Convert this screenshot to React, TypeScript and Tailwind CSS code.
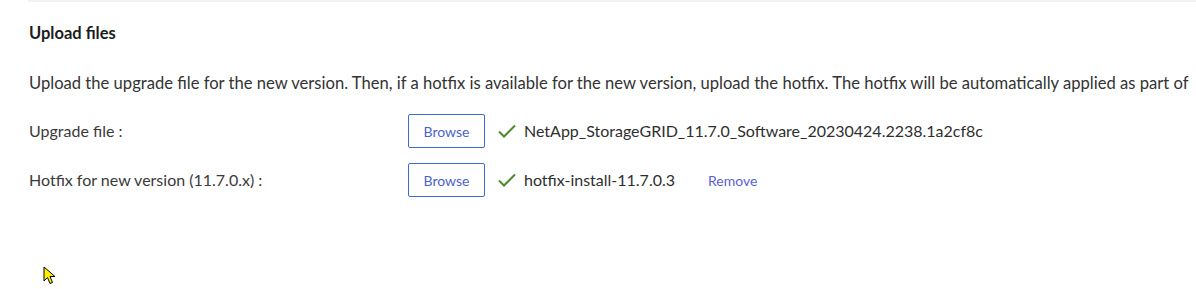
import React from "react";

const font = { fontFamily: '"Source Sans Pro", Lato, "Noto Sans", sans-serif' };

function Check() {
  return (
    <svg width="20" height="16" viewBox="0 0 20 16" className="shrink-0">
      <path d="M2 8.5 L7 13.5 L18 2.5" fill="none" stroke="#4f8a2f" strokeWidth="2" />
    </svg>
  );
}

function FileRow({ label, file, removable }: { label: string; file: string; removable?: boolean }) {
  return (
    <div className="flex h-[34px] items-center">
      <div className="w-[379px] shrink-0 text-[16px] text-[#3a3a3a]">{label}</div>
      <button
        type="button"
        className="h-[34px] w-[77px] rounded-[2px] border border-[#3d6ad6] bg-white text-[14px] text-[#4b63c8]"
      >
        Browse
      </button>
      <div className="ml-[12px] flex items-center gap-[7px]">
        <Check />
        <span className="text-[16px] text-[#2f2f2f]">{file}</span>
      </div>
      {removable && <span className="ml-[33px] text-[14px] text-[#5a5fd4]">Remove</span>}
    </div>
  );
}

export default function App() {
  return (
    <div className="relative h-[289px] w-[1196px] overflow-hidden bg-white" style={font}>
      <div className="ml-[28px] h-[2px] bg-[#f1f1f1]" />
      <div className="pl-[29px]">
        <h2 className="mt-[21px] text-[16.5px] font-bold leading-[20px] text-[#1c1c1c]">Upload files</h2>
        <p className="mt-[30px] whitespace-nowrap text-[16.6px] leading-[20px] text-[#333]">
          Upload the upgrade file for the new version. Then, if a hotfix is available for the new version, upload the hotfix. The hotfix will be automatically applied as part of
        </p>
        <div className="mt-[21px] flex flex-col gap-[15px]">
          <FileRow label="Upgrade file :" file="NetApp_StorageGRID_11.7.0_Software_20230424.2238.1a2cf8c" />
          <FileRow label="Hotfix for new version (11.7.0.x) :" file="hotfix-install-11.7.0.3" removable />
        </div>
      </div>
      <svg className="absolute left-[43px] top-[266px]" width="14" height="20" viewBox="0 0 14 20">
        <path d="M1 1 L1 15 L4.5 11.5 L7 17.5 L9.5 16.5 L7 10.5 L12 10.5 Z" fill="#ffee00" stroke="#000" strokeWidth="1" strokeLinejoin="round" />
      </svg>
    </div>
  );
}
